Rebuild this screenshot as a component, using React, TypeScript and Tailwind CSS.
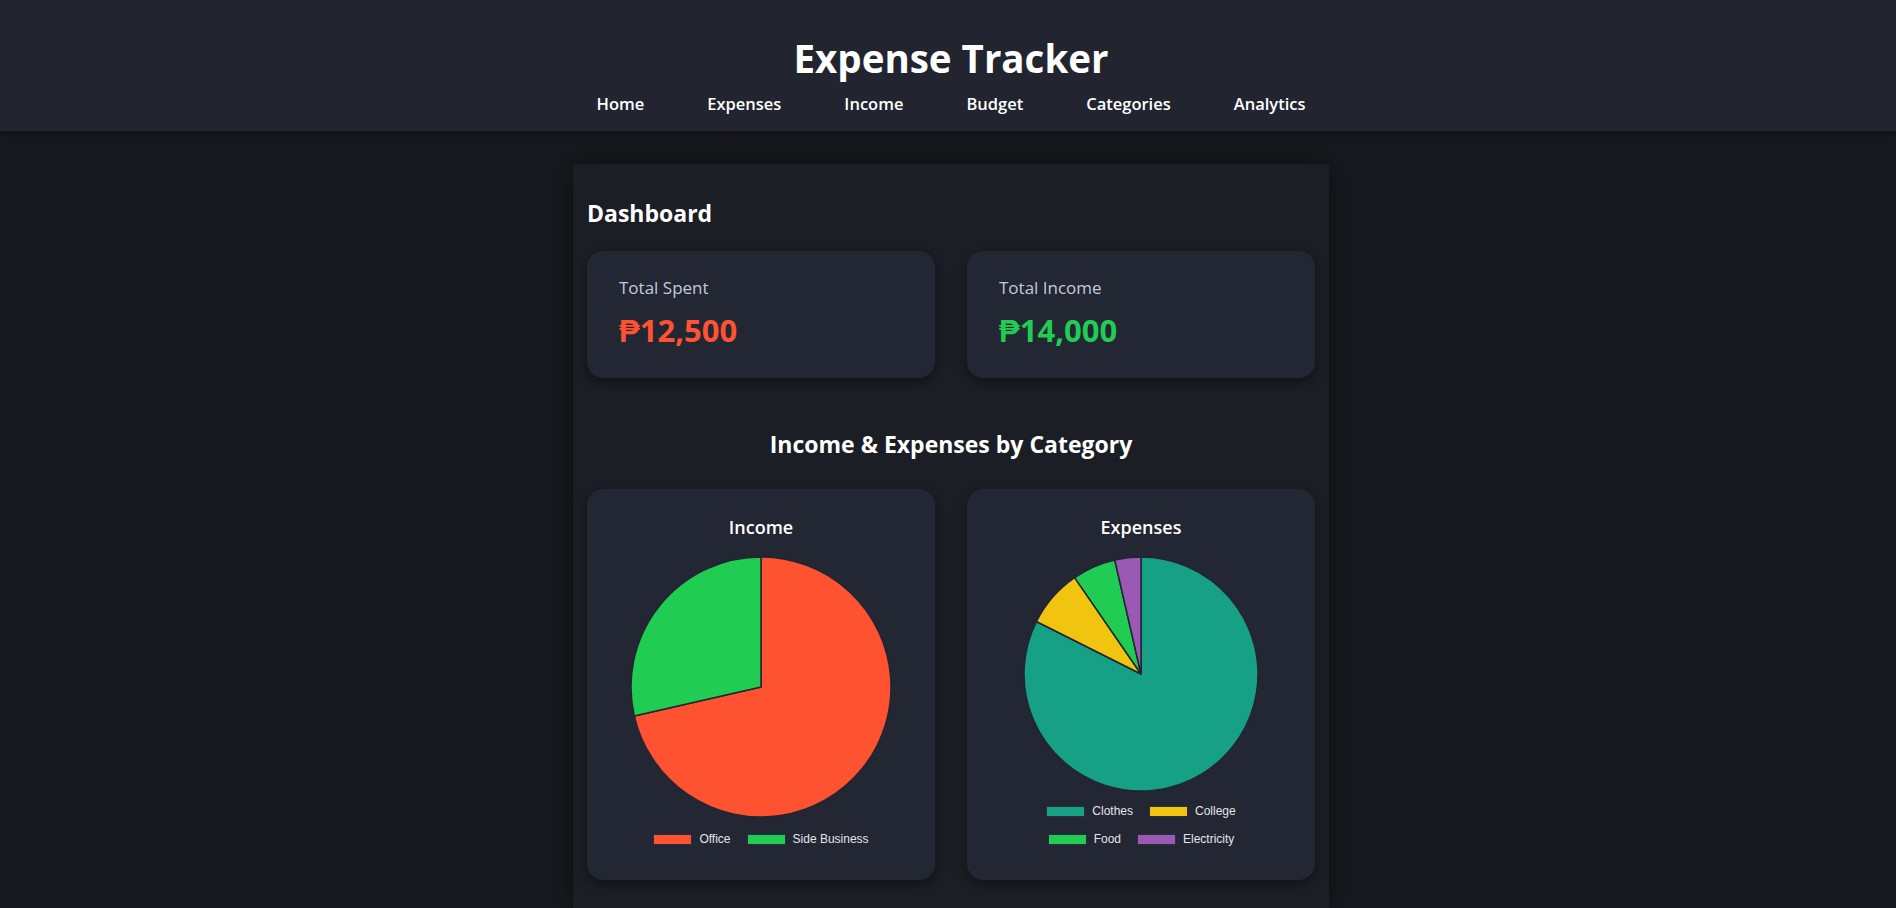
type Slice = { label: string; value: number; color: string };

const incomeData: Slice[] = [
  { label: "Office", value: 10000, color: "#ff5230" },
  { label: "Side Business", value: 4000, color: "#20cc52" },
];

const expenseData: Slice[] = [
  { label: "Clothes", value: 10300, color: "#16a086" },
  { label: "College", value: 1000, color: "#f1c40f" },
  { label: "Food", value: 750, color: "#20cc52" },
  { label: "Electricity", value: 450, color: "#9b59b6" },
];

function Pie({ data, size }: { data: Slice[]; size: number }) {
  const total = data.reduce((s, d) => s + d.value, 0);
  const r = size / 2 - 1;
  const c = size / 2;
  let acc = 0;
  return (
    <svg width={size} height={size} viewBox={`0 0 ${size} ${size}`}>
      {data.map((d) => {
        const a0 = (acc / total) * Math.PI * 2;
        acc += d.value;
        const a1 = (acc / total) * Math.PI * 2;
        const x0 = c + r * Math.sin(a0);
        const y0 = c - r * Math.cos(a0);
        const x1 = c + r * Math.sin(a1);
        const y1 = c - r * Math.cos(a1);
        const large = a1 - a0 > Math.PI ? 1 : 0;
        return (
          <path
            key={d.label}
            d={`M ${c} ${c} L ${x0} ${y0} A ${r} ${r} 0 ${large} 1 ${x1} ${y1} Z`}
            fill={d.color}
            stroke="#232533"
            strokeWidth={1.5}
            strokeLinejoin="round"
          />
        );
      })}
    </svg>
  );
}

function LegendItem({ item }: { item: Slice }) {
  return (
    <div className="flex items-center gap-[7px]">
      <span className="block w-[39px] h-[11px] border border-[#2a2d3a]" style={{ background: item.color }} />
      <span className="text-[12px] leading-[14px] text-[#e3e4e8]">{item.label}</span>
    </div>
  );
}

const navItems = ["Home", "Expenses", "Income", "Budget", "Categories", "Analytics"];

export default function App() {
  return (
    <div className="min-h-screen bg-[#18191e] pl-[6px] font-['Open_Sans',sans-serif] text-white">
      <header className="-ml-[6px] pl-[6px] bg-[#22252f] pt-[35px] pb-[15px] shadow-[0_2px_8px_rgba(0,0,0,0.35)] relative">
        <h1 className="text-center text-[38.5px] leading-[46px] font-bold">Expense Tracker</h1>
        <nav className="mt-[11px] flex justify-center gap-[63px]">
          {navItems.map((n) => (
            <a key={n} className="text-[16.5px] leading-6 font-semibold text-white">
              {n}
            </a>
          ))}
        </nav>
      </header>

      <main className="w-[756px] mx-auto mt-[33px] bg-[#1b1e25] px-[14px] pt-[31px] pb-8 shadow-[0_0_24px_rgba(0,0,0,0.45)]">
        <h2 className="text-[23px] leading-9 font-bold">Dashboard</h2>

        <div className="mt-5 grid grid-cols-2 gap-8">
          <div className="bg-[#232633] rounded-2xl px-8 pt-6 pb-[26px] shadow-[0_4px_12px_rgba(0,0,0,0.4)]">
            <p className="text-[17px] leading-[25px] text-[#c3cadb]">Total Spent</p>
            <p className="mt-2 text-[31px] leading-[44px] font-bold text-[#ff5230]">₱12,500</p>
          </div>
          <div className="bg-[#232633] rounded-2xl px-8 pt-6 pb-[26px] shadow-[0_4px_12px_rgba(0,0,0,0.4)]">
            <p className="text-[17px] leading-[25px] text-[#c3cadb]">Total Income</p>
            <p className="mt-2 text-[31px] leading-[44px] font-bold text-[#20cc52]">₱14,000</p>
          </div>
        </div>

        <h2 className="mt-[48px] text-center text-[23px] leading-9 font-bold">Income &amp; Expenses by Category</h2>

        <div className="mt-[27px] grid grid-cols-2 gap-8">
          <div className="bg-[#232633] rounded-2xl h-[391px] pt-6 flex flex-col items-center shadow-[0_4px_12px_rgba(0,0,0,0.4)]">
            <h3 className="text-[18px] leading-7 font-semibold">Income</h3>
            <div className="mt-[15px]">
              <Pie data={incomeData} size={262} />
            </div>
            <div className="mt-[14px] flex justify-center gap-[16px] font-['Liberation_Sans',Arial,sans-serif]">
              {incomeData.map((d) => (
                <LegendItem key={d.label} item={d} />
              ))}
            </div>
          </div>

          <div className="bg-[#232633] rounded-2xl h-[391px] pt-6 flex flex-col items-center shadow-[0_4px_12px_rgba(0,0,0,0.4)]">
            <h3 className="text-[18px] leading-7 font-semibold">Expenses</h3>
            <div className="mt-[15px]">
              <Pie data={expenseData} size={236} />
            </div>
            <div className="mt-[12px] flex flex-col items-center gap-[14px] font-['Liberation_Sans',Arial,sans-serif]">
              <div className="flex justify-center gap-[16px]">
                {expenseData.slice(0, 2).map((d) => (
                  <LegendItem key={d.label} item={d} />
                ))}
              </div>
              <div className="flex justify-center gap-[16px]">
                {expenseData.slice(2).map((d) => (
                  <LegendItem key={d.label} item={d} />
                ))}
              </div>
            </div>
          </div>
        </div>
      </main>
    </div>
  );
}
